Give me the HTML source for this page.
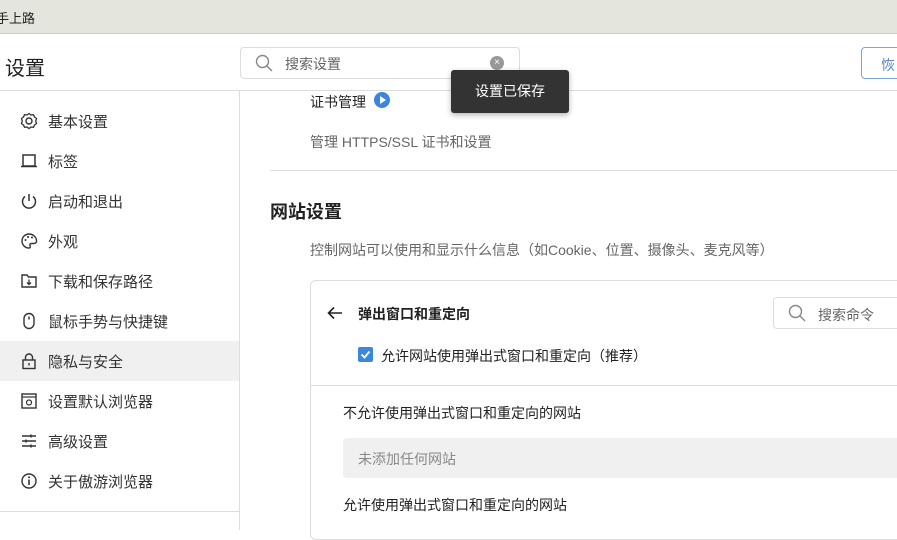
<!DOCTYPE html>
<html><head><meta charset="utf-8"><style>
*{margin:0;padding:0;box-sizing:border-box}
body{width:897px;height:530px;overflow:hidden;background:#fff;font-family:"Liberation Sans","Noto Sans CJK SC",sans-serif;color:#222;position:relative}
.a{position:absolute;white-space:nowrap}
.nav{position:absolute;left:20px;font-size:15px;color:#333;display:flex;align-items:center;height:20px}
.nav svg{width:18px;height:18px;margin-right:10px}
</style></head><body>
<div class="a" style="left:0;top:0;width:897px;height:34px;background:#e4e5dc;border-bottom:1px solid #d0d0c8"></div>
<div class="a" style="left:-4px;top:8px;font-size:13px;color:#222">手上路</div>
<div class="a" style="left:5px;top:52px;font-size:20px;color:#222">设置</div>
<div class="a" style="left:240px;top:47px;width:280px;height:32px;border:1px solid #ddd;border-radius:4px"></div>
<svg class="a" style="left:255px;top:54px" width="18" height="18" viewBox="0 0 18 18"><circle cx="7.5" cy="7.5" r="6" fill="none" stroke="#888" stroke-width="1.4"/><path d="M12 12l5 5" stroke="#888" stroke-width="1.4"/></svg>
<div class="a" style="left:285px;top:54px;font-size:14px;color:#666">搜索设置</div>
<div class="a" style="left:490px;top:56px;width:14px;height:14px;border-radius:50%;background:#999;color:#fff;font-size:10px;line-height:14px;text-align:center">×</div>
<div class="a" style="left:861px;top:47px;width:50px;height:32px;border:1px solid #7aa6d6;border-radius:4px;font-size:14px;color:#5a8acb;padding:7px 0 0 19px">恢</div>
<div class="a" style="left:0;top:90px;width:897px;height:1px;background:#ddd"></div>
<div class="a" style="left:239px;top:91px;width:1px;height:439px;background:#ddd"></div>
<div class="a" style="left:0;top:511px;width:239px;height:1px;background:#ddd"></div>
<div class="a" style="left:0;top:341px;width:239px;height:40px;background:#f0f0f0"></div>

<div class="nav" style="top:111px"><svg viewBox="0 0 18 18"><circle cx="9" cy="9" r="3" fill="none" stroke="#333" stroke-width="1.4"/><path d="M9 1.5l2 1.5 2.5-.3 1 2.3 2 1.5-.8 2.5.8 2.5-2 1.5-1 2.3-2.5-.3-2 1.5-2-1.5-2.5.3-1-2.3-2-1.5.8-2.5-.8-2.5 2-1.5 1-2.3 2.5.3z" fill="none" stroke="#333" stroke-width="1.3"/></svg>基本设置</div>
<div class="nav" style="top:151px"><svg viewBox="0 0 18 18"><path d="M3 3h12v11H3zM1 14.5h16" fill="none" stroke="#333" stroke-width="1.5"/></svg>标签</div>
<div class="nav" style="top:191px"><svg viewBox="0 0 18 18"><path d="M5 4.5a6.5 6.5 0 1 0 8 0M9 2v7" fill="none" stroke="#333" stroke-width="1.5"/></svg>启动和退出</div>
<div class="nav" style="top:231px"><svg viewBox="0 0 18 18"><path d="M9 2a7 7 0 0 0 0 14c1.5 0 1.5-1.5 1-2.5s0-2 1.5-2H14a2.5 2.5 0 0 0 2.5-3A7.5 7 0 0 0 9 2z" fill="none" stroke="#333" stroke-width="1.4"/><circle cx="5.5" cy="8" r="1" fill="#333"/><circle cx="8" cy="5" r="1" fill="#333"/><circle cx="12" cy="5.5" r="1" fill="#333"/></svg>外观</div>
<div class="nav" style="top:271px"><svg viewBox="0 0 18 18"><path d="M2 3h5l1.5 2H16v10H2z" fill="none" stroke="#333" stroke-width="1.4"/><path d="M9 7.5v5M7 10.5l2 2 2-2" fill="none" stroke="#333" stroke-width="1.3"/></svg>下载和保存路径</div>
<div class="nav" style="top:311px"><svg viewBox="0 0 18 18"><rect x="4" y="1.5" width="10" height="15" rx="5" fill="none" stroke="#333" stroke-width="1.4"/><path d="M9 4.5v3" stroke="#333" stroke-width="1.4"/></svg>鼠标手势与快捷键</div>
<div class="nav" style="top:351px"><svg viewBox="0 0 18 18"><rect x="3" y="8" width="12" height="8.5" fill="none" stroke="#333" stroke-width="1.4"/><path d="M5.5 8V5.5a3.5 3.5 0 0 1 7 0V8M9 11v2.5" fill="none" stroke="#333" stroke-width="1.4"/></svg>隐私与安全</div>
<div class="nav" style="top:391px"><svg viewBox="0 0 18 18"><rect x="2" y="2" width="14" height="14" fill="none" stroke="#333" stroke-width="1.4"/><path d="M2 5h14" stroke="#333" stroke-width="1.2"/><circle cx="9" cy="10.5" r="2.5" fill="none" stroke="#333" stroke-width="1.2"/></svg>设置默认浏览器</div>
<div class="nav" style="top:431px"><svg viewBox="0 0 18 18"><path d="M2 4h14M2 9h14M2 14h14" stroke="#333" stroke-width="1.5"/><path d="M11 2.5v3M6 7.5v3M11 12.5v3" stroke="#333" stroke-width="1.5"/></svg>高级设置</div>
<div class="nav" style="top:471px"><svg viewBox="0 0 18 18"><circle cx="9" cy="9" r="7" fill="none" stroke="#333" stroke-width="1.4"/><path d="M9 7.5v5.5" stroke="#333" stroke-width="1.6"/><circle cx="9" cy="5.2" r="1" fill="#333"/></svg>关于傲游浏览器</div>

<div class="a" style="left:310px;top:92px;font-size:14px;color:#222">证书管理</div>
<div class="a" style="left:374px;top:92px;width:16px;height:16px;border-radius:50%;background:#3b86e0"></div>
<svg class="a" style="left:379px;top:96px" width="8" height="8" viewBox="0 0 8 8"><path d="M1 0l6 4-6 4z" fill="#fff"/></svg>
<div class="a" style="left:310px;top:132px;font-size:14px;color:#666">管理 HTTPS/SSL 证书和设置</div>
<div class="a" style="left:270px;top:170px;width:627px;height:1px;background:#ddd"></div>
<div class="a" style="left:270px;top:198px;font-size:18px;font-weight:bold;color:#222">网站设置</div>
<div class="a" style="left:310px;top:240px;font-size:14px;color:#666">控制网站可以使用和显示什么信息（如Cookie、位置、摄像头、麦克风等）</div>

<div class="a" style="left:310px;top:280px;width:600px;height:260px;border:1px solid #ddd;border-radius:6px"></div>
<svg class="a" style="left:326px;top:304px" width="18" height="18" viewBox="0 0 18 18"><path d="M16 9H3M8 3.5L2.5 9 8 14.5" fill="none" stroke="#222" stroke-width="1.6"/></svg>
<div class="a" style="left:358px;top:304px;font-size:14px;font-weight:bold;color:#222">弹出窗口和重定向</div>
<div class="a" style="left:773px;top:297px;width:140px;height:32px;border:1px solid #ddd;border-radius:4px"></div>
<svg class="a" style="left:788px;top:304px" width="18" height="18" viewBox="0 0 18 18"><circle cx="7.5" cy="7.5" r="6" fill="none" stroke="#888" stroke-width="1.4"/><path d="M12 12l5 5" stroke="#888" stroke-width="1.4"/></svg>
<div class="a" style="left:818px;top:305px;font-size:14px;color:#666">搜索命令</div>
<div class="a" style="left:358px;top:347px;width:15px;height:15px;border-radius:2px;background:#3b86e0"></div>
<svg class="a" style="left:358px;top:347px" width="15" height="15" viewBox="0 0 15 15"><path d="M3.5 7.5l3 3 5-6" fill="none" stroke="#fff" stroke-width="1.8"/></svg>
<div class="a" style="left:381px;top:346px;font-size:14px;color:#222">允许网站使用弹出式窗口和重定向（推荐）</div>
<div class="a" style="left:311px;top:385px;width:586px;height:1px;background:#ddd"></div>
<div class="a" style="left:343px;top:403px;font-size:14px;color:#222">不允许使用弹出式窗口和重定向的网站</div>
<div class="a" style="left:343px;top:438px;width:560px;height:40px;background:#f0f0f0;border-radius:4px"></div>
<div class="a" style="left:358px;top:449px;font-size:14px;color:#888">未添加任何网站</div>
<div class="a" style="left:343px;top:495px;font-size:14px;color:#222">允许使用弹出式窗口和重定向的网站</div>

<div class="a" style="left:451px;top:70px;width:118px;height:43px;background:#333;border-radius:3px;box-shadow:0 2px 6px rgba(0,0,0,.3);color:#fff;font-size:14px;text-align:center;line-height:43px">设置已保存</div>
</body></html>
